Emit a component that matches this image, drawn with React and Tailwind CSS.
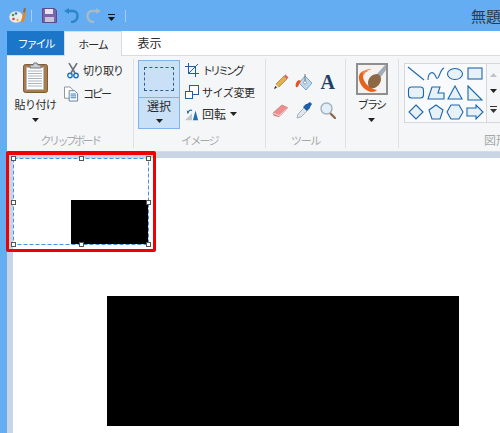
const Arrow = ({ className = "" }) => (
  <svg width="7" height="4" viewBox="0 0 7 4" className={className}><path d="M0 0h7L3.500 4z" fill="#222" /></svg>
);

const Handle = ({ className }) => (
  <span className={`absolute w-[5px] h-[5px] bg-white border border-[#555] ${className}`} />
);

const Clipboard = () => (
  <svg width="25" height="31" viewBox="0 0 25 31">
    <rect x="0.5" y="2.500" width="24" height="28" rx="2" fill="#a97c50" stroke="#7d5a38" />
    <rect x="3.500" y="5.500" width="17" height="22" fill="#fff" stroke="#bbb" />
    <path d="M5 9h14M5 11.500h14M5 14h14M5 16.500h14M5 19h14M5 21.500h14M5 24h14" stroke="#a9b4bf" />
    <path d="M7 6V3h3l1-2h3l1 2h3v3z" fill="#c9ccd0" stroke="#777" />
  </svg>
);

const Scissors = () => (
  <svg width="12" height="16" viewBox="0 0 12 16" fill="none">
    <path d="M2 0l6 10M10 0L4 10" stroke="#6d7580" strokeWidth="1.600" />
    <circle cx="3" cy="12.500" r="2.200" stroke="#1c73c4" strokeWidth="1.400" />
    <circle cx="9" cy="12.500" r="2.200" stroke="#1c73c4" strokeWidth="1.400" />
  </svg>
);

const Copy = () => (
  <svg width="16" height="16" viewBox="0 0 16 16" fill="none">
    <path d="M.5.5h6l3 3v9h-9z" fill="#fff" stroke="#8a8f96" />
    <path d="M5.500 4.500h6l3 3v8h-9z" fill="#fff" stroke="#5f7f9f" />
    <path d="M7 8h6M7 10h6M7 12h6" stroke="#2a77bd" />
  </svg>
);

const Trim = () => (
  <svg width="14" height="14" viewBox="0 0 14 14" fill="none">
    <path d="M3.500 0v10.500H14M0 3.500h10.500V14" stroke="#1f5f9f" />
    <path d="M3 11L13 1" stroke="#1f5f9f" />
  </svg>
);

const Resize = () => (
  <svg width="14" height="14" viewBox="0 0 14 14" fill="none">
    <rect x="4.500" y="0.500" width="9" height="9" stroke="#1f5f9f" fill="#fff" />
    <rect x="0.500" y="6.500" width="7" height="7" stroke="#1f5f9f" fill="#fff" />
  </svg>
);

const Rotate = () => (
  <svg width="16" height="15" viewBox="0 0 16 15">
    <path d="M0 14L8 6v8z" fill="#c2c6cb" />
    <path d="M9 14l3-11 3 11z" fill="#1f6fb5" />
    <path d="M3 6c1-3 3-4 5-3" stroke="#1f6fb5" strokeWidth="1.400" fill="none" />
    <path d="M2 3l3 1-2 3z" fill="#1f6fb5" />
  </svg>
);

const Pencil = () => (
  <svg width="16" height="16" viewBox="0 0 16 16">
    <path d="M3 10L11 2l3 3-8 8z" fill="#e3b04b" stroke="#8c6d2f" strokeWidth=".6" />
    <path d="M11 2l1.500-1.500 3 3L14 5z" fill="#d9636b" />
    <path d="M3 10l3 3-5 2z" fill="#eed9b3" />
    <path d="M1 15l1.200-3 1.800 1.800z" fill="#333" />
  </svg>
);

const Fill = () => (
  <svg width="18" height="18" viewBox="0 0 18 18">
    <path d="M10 3l7 7-6 7-7-7z" fill="#bcd8ef" stroke="#7aa7cc" />
    <path d="M10 1v8" stroke="#777" />
    <path d="M4 7C1 8 0 12 1 14c1 1 3-1 3-3l2-3z" fill="#e8531a" />
    <circle cx="10" cy="9.500" r="1.500" fill="#fff" stroke="#777" strokeWidth=".6" />
  </svg>
);

const Eraser = () => (
  <svg width="17" height="14" viewBox="0 0 17 14">
    <path d="M1 9l9-8 6 3-9 8.500-5-1z" fill="#ee8f8f" stroke="#c46a6a" strokeWidth=".7" />
    <path d="M1 9l6 2.500L16 4" stroke="#fbd2d2" fill="none" />
  </svg>
);

const Dropper = () => (
  <svg width="16" height="17" viewBox="0 0 16 17">
    <path d="M1 16l1-4 6-6 3 3-6 6z" fill="#dfe6ec" stroke="#8b98a5" strokeWidth=".7" />
    <path d="M7 5l3-3 1 0 3-2 2 2-2 3v1l-3 3z" fill="#1c5ea8" />
  </svg>
);

const Magnifier = () => (
  <svg width="16" height="17" viewBox="0 0 16 17" fill="none">
    <path d="M10 11l5 5" stroke="#8b6a4c" strokeWidth="2.400" strokeLinecap="round" />
    <circle cx="6.500" cy="6.500" r="5.500" fill="#e3eff8" stroke="#a6b0ba" strokeWidth="1.400" />
  </svg>
);

const Brush = () => (
  <div className="w-[32px] h-[32px] border-2 border-[#8f8f8f] bg-[#f4f3f1] flex">
    <svg width="28" height="28" viewBox="0 0 28 28">
      <path d="M1 11C0 17 5 25 13 27c3 0 5-1 6-2C13 24 6 19 5 12c0-3 2-5 5-6C5 5 2 7 1 11z" fill="#e8601c" />
      <path d="M4 8c2-3 5-4 8-4 1 0 1 1 0 1-3 0-5 2-6 5z" fill="#f08a4a" />
      <path d="M18 10l9-10h1v5l-6 8z" fill="#a3abb4" />
      <path d="M10 18c0-5 4-9 9-9 4 1 5 5 3 9-2 4-6 6-9 5-2 0-3-3-3-5z" fill="#8d6844" />
    </svg>
  </div>
);

const shapeStroke = { stroke: "#1d66ab", fill: "#e6f1f8", strokeWidth: 1.100 };
const shapes = [
  <path d="M1 1l16 13" {...shapeStroke} fill="none" />,
  <path d="M1 14c0-8 5-9 7-5s2 5 4 1 2-7 5-8" {...shapeStroke} fill="none" />,
  <ellipse cx="9" cy="8" rx="7.500" ry="5.500" {...shapeStroke} />,
  <rect x="2" y="2" width="14" height="11" {...shapeStroke} />,
  <rect x="1.500" y="2" width="15" height="11" rx="3" {...shapeStroke} />,
  <path d="M1 14L5 2h8l-2 6h6v6z" {...shapeStroke} />,
  <path d="M9 1l7 13H2z" {...shapeStroke} />,
  <path d="M2 1l14 14H2z" {...shapeStroke} />,
  <path d="M9 1l7 7-7 7-7-7z" {...shapeStroke} />,
  <path d="M9 1l7 5-3 9H5L2 6z" {...shapeStroke} />,
  <path d="M5 1h8l4 7-4 7H5L1 8z" {...shapeStroke} />,
  <path d="M1 4h9V1l7 7-7 7v-3H1z" {...shapeStroke} />,
];

const Group = ({ label, labelClass = "", className = "", children }) => (
  <div className={`flex flex-col h-full shrink-0 border-r border-[#dfe0e1] ${className}`}>
    <div className="h-[72px] flex">{children}</div>
    <div className={`flex-1 flex items-center justify-center text-[11px] text-[#a5a8ab] pt-[1px] ${labelClass}`}>{label}</div>
  </div>
);

export default function App() {
  return (
    <div className="relative w-[500px] h-[433px] overflow-hidden bg-[#64adf2] font-['Noto_Sans_CJK_JP',sans-serif] leading-none text-[#2b2b2b]">
      {/* Title bar */}
      <div className="h-[31px] flex items-center pl-[9px]">
        <svg width="18" height="17" viewBox="0 0 18 17">
          <ellipse cx="7" cy="10" rx="7" ry="6" fill="#e9edf0" stroke="#9aa5ae" strokeWidth=".6" />
          <circle cx="4" cy="8" r="1.300" fill="#3f9c3f" />
          <circle cx="7" cy="6.500" r="1.300" fill="#2a77bd" />
          <circle cx="4.500" cy="12" r="1.300" fill="#d6463c" />
          <circle cx="8.500" cy="13" r="1.200" fill="#e8b23a" />
          <path d="M12 14l3-10 2 1-2 10z" fill="#e8871e" />
          <path d="M14 5l1-4 2 .5-1 4z" fill="#8d6844" />
        </svg>
        <div className="w-px h-[12px] bg-[#a9cdf0] ml-[4px]" />
        <svg width="15" height="15" viewBox="0 0 15 15" className="ml-[10px]">
          <path d="M.5.5h12l2 2v12H.5z" fill="#7a64ae" stroke="#5a4a8c" />
          <rect x="3" y="1" width="8" height="5" fill="#e7e3f0" />
          <rect x="3" y="9" width="9" height="5" fill="#c9c3d9" />
        </svg>
        <svg width="15" height="15" viewBox="0 0 15 15" className="ml-[7px]" fill="none">
          <path d="M3 3h6c6 0 6 9 0 11H7" stroke="#2a86c8" strokeWidth="2.400" />
          <path d="M0 3l5-3v6z" fill="#2a86c8" />
        </svg>
        <svg width="15" height="15" viewBox="0 0 15 15" className="ml-[7px]" fill="none">
          <path d="M12 3H6C0 3 0 12 6 14h2" stroke="#a9b9c7" strokeWidth="2.400" />
          <path d="M15 3l-5-3v6z" fill="#a9b9c7" />
        </svg>
        <svg width="7" height="7" viewBox="0 0 7 7" className="ml-[7px] mt-[3px]">
          <path d="M0 0h7v1H0zM0 3h7L3.500 7z" fill="#111" />
        </svg>
        <div className="w-px h-[12px] bg-[#a9cdf0] ml-[10px]" />
        <div className="flex-1" />
        <span className="w-[29px] text-[15px] text-[#2f3a45] whitespace-nowrap">無題</span>
      </div>

      <div className="ml-[7px] bg-white">
        {/* Tabs */}
        <div className="h-[24px] flex items-stretch text-[12px] bg-white">
          <div className="w-[57px] bg-[#1b75c8] text-white flex items-center justify-center text-[11px] tracking-[-2px]">ファイル</div>
          <div className="w-[58px] bg-[#f5f6f7] border-x border-t border-[#dadbdc] flex items-center justify-center relative z-10 h-[25px] text-[11px] tracking-[-1px]">ホーム</div>
          <div className="w-[55px] flex items-center justify-center">表示</div>
        </div>

        {/* Ribbon */}
        <div className="h-[97px] bg-[#f5f6f7] border-y border-[#dadbdc] flex text-[12px] py-[3px]">
          <Group label="クリップボード" labelClass="tracking-[-2.6px]" className="w-[127px]">
            <div className="w-[57px] flex flex-col items-center pt-[3px]">
              <Clipboard />
              <span className="mt-[6px] whitespace-nowrap text-[11px] tracking-[-0.5px]">貼り付け</span>
              <Arrow className="mt-[8px]" />
            </div>
            <div className="flex flex-col">
              <div className="h-[23px] flex items-center gap-[4px]">
                <span className="w-[15px] flex justify-center pl-[2px]"><Scissors /></span>
                <span className="whitespace-nowrap text-[11px] tracking-[-1px]">切り取り</span>
              </div>
              <div className="h-[23px] flex items-center gap-[4px]">
                <span className="w-[15px] flex justify-center"><Copy /></span>
                <span className="whitespace-nowrap text-[11px] tracking-[-2px]">コピー</span>
              </div>
            </div>
          </Group>
          <Group label="イメージ" labelClass="tracking-[-1.75px]" className="w-[132px]">
            <div className="w-[42px] h-[69px] ml-[4px] mt-[1px] border border-[#7eb4ea] bg-[#c9e0f7] flex flex-col items-center">
              <div className="h-[37px] w-full border-b border-[#7eb4ea] flex items-center justify-center shrink-0">
                <div className="w-[30px] h-[24px] border border-dashed border-[#2a5f9e]" />
              </div>
              <span className="mt-[2px]">選択</span>
              <Arrow className="mt-[7px]" />
            </div>
            <div className="flex flex-col ml-[5px]">
              <div className="h-[22px] flex items-center gap-[3px] whitespace-nowrap"><span className="w-[14px] flex"><Trim /></span><span className="text-[11px] tracking-[-3px]">トリミング</span></div>
              <div className="h-[22px] flex items-center gap-[3px] whitespace-nowrap"><span className="w-[14px] flex"><Resize /></span><span className="text-[11px] tracking-[-0.4px]">サイズ変更</span></div>
              <div className="h-[22px] flex items-center gap-[3px] whitespace-nowrap"><span className="w-[14px] flex"><Rotate /></span><span>回転</span><Arrow className="ml-[1px]" /></div>
            </div>
          </Group>
          <Group label="ツール" labelClass="tracking-[-1.3px]" className="w-[80px]">
            <div className="grid grid-cols-[repeat(3,23.500px)] grid-rows-[29px_29px] ml-[3px] pt-[8px] place-items-center">
              <Pencil />
              <Fill />
              <span className="font-['Liberation_Serif',serif] font-bold text-[20px] text-[#1f3f66]">A</span>
              <Eraser />
              <Dropper />
              <Magnifier />
            </div>
          </Group>
          <Group label="" className="w-[53px]">
            <div className="w-full flex flex-col items-center pt-[4px] pr-[1px]">
              <Brush />
              <span className="mt-[4px] text-[11px] tracking-[-1.7px]">ブラシ</span>
              <Arrow className="mt-[8px]" />
            </div>
          </Group>
          <div className="flex-1 min-w-0 flex flex-col h-full pl-[5px]">
            <div className="h-[72px] flex pt-[4px]">
              <div className="w-[83px] h-[60px] border border-[#d5d7d9] bg-[#f8fafd] grid grid-cols-4 grid-rows-3 place-items-center shrink-0 px-[1px]">
                {shapes.map((s, i) => (
                  <svg key={i} width="18" height="16" viewBox="0 0 18 16">{s}</svg>
                ))}
              </div>
              <div className="w-[13px] shrink-0 h-[60px] flex flex-col items-center justify-around py-[3px] bg-[#f5f6f7] border-y border-[#d5d7d9]">
                <svg width="7" height="4" viewBox="0 0 7 4"><path d="M0 4h7L3.500 0z" fill="#bfc3c7" /></svg>
                <Arrow />
                <svg width="7" height="7" viewBox="0 0 7 7"><path d="M0 0h7v1H0zM0 3h7L3.500 7z" fill="#333" /></svg>
              </div>
            </div>
            <div className="flex-1 flex items-center pl-[80px] text-[12px] text-[#a5a8ab] whitespace-nowrap pt-[1px]">図形</div>
          </div>
        </div>

        {/* Canvas area */}
        <div className="relative h-[281px] bg-[#c9d4e4] pl-[6px] pt-[6px]">
          <div className="relative w-full h-full bg-white">
            <div className="absolute left-[94px] top-[138px] w-[352px] h-[130px] bg-black" />
            <div className="absolute left-[58px] top-[42px] w-[77px] h-[44px] bg-black" />
            <div className="absolute left-0 top-0 w-[136px] h-[87px]">
              <svg width="136" height="87" viewBox="0 0 136 87" fill="none" className="absolute inset-0">
                <rect x="0.500" y="0.500" width="135" height="86" stroke="#3d95ec" strokeDasharray="4 2" />
              </svg>
              <Handle className="left-[-2px] top-[-2px]" />
              <Handle className="left-[66px] top-[-2px]" />
              <Handle className="right-[-2px] top-[-2px]" />
              <Handle className="left-[-2px] top-[42px]" />
              <Handle className="right-[-2px] top-[42px]" />
              <Handle className="left-[-2px] bottom-[-2px]" />
              <Handle className="left-[66px] bottom-[-2px]" />
              <Handle className="right-[-2px] bottom-[-2px]" />
            </div>
          </div>
        </div>
      </div>

      {/* Red annotation frame */}
      <div className="absolute left-[6px] top-[151px] w-[150px] h-[101px] border-[3px] border-t-4 border-[#f00000] rounded-[2px]" />
    </div>
  );
}
